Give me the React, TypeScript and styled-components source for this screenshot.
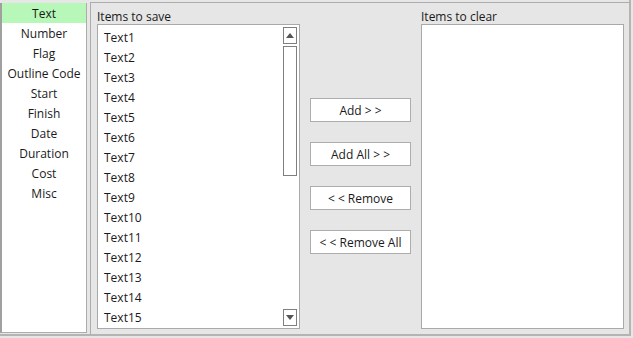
import { FC } from "react";
import styled, { createGlobalStyle } from "styled-components";

const GlobalStyle = createGlobalStyle`
html, body {
  margin: 0;
  padding: 0;
  background: #e6e6e6;
}
* {
  box-sizing: border-box;
}
`;

const Window = styled.div`
width: 633px;
height: 338px;
background: #e6e6e6;
font-family: "Open Sans", "Noto Sans", sans-serif;
font-size: 12px;
color: #1a1a1a;
overflow: hidden;
`;

const Frame = styled.div`
width: 631px;
height: 336px;
display: flex;
align-items: stretch;
border-right: 2px solid #b4b4b4;
border-bottom: 2px solid #b4b4b4;
`;

const CategoryList = styled.div`
width: 87px;
margin-top: 3px;
margin-bottom: 1px;
background: #fff;
border: 1px solid #acacac;
border-left: 2px solid #a0a0a0;
border-top: none;
display: flex;
flex-direction: column;
`;

const CategoryItem = styled.div<{ $selected?: boolean }>`
height: 20px;
line-height: 22px;
text-align: center;
white-space: nowrap;
background: ${p => (p.$selected ? "#b7f7b7" : "transparent")};
`;

const MainPanel = styled.div`
flex: 1;
margin-left: 3px;
margin-top: 2px;
border-top: 1px solid #acacac;
border-left: 1px solid #acacac;
display: grid;
grid-template-columns: 203px 101px 203px;
grid-template-rows: 20px 1fr;
column-gap: 10px;
padding: 1px 0 5px 6px;
`;

const Label = styled.div`
line-height: 20px;
padding-top: 3px;
white-space: nowrap;
`;

const ListBox = styled.div`
background: #fff;
border: 1px solid #a9a9a9;
display: flex;
overflow: hidden;
`;

const ListItems = styled.div`
flex: 1;
padding: 3px 0 0 6px;
`;

const ListItem = styled.div`
height: 20px;
line-height: 20px;
`;

const ScrollBar = styled.div`
width: 14px;
margin: 2px 2px 2px 0;
display: flex;
flex-direction: column;
gap: 2px;
`;

const ArrowButton = styled.div`
height: 17px;
border: 1px solid #7f7f7f;
display: flex;
align-items: center;
justify-content: center;
`;

const Track = styled.div`
flex: 1;
display: flex;
flex-direction: column;
`;

const Thumb = styled.div`
height: 130px;
border: 1px solid #7f7f7f;
background: #fff;
`;

const ButtonColumn = styled.div`
display: flex;
flex-direction: column;
gap: 20px;
padding-top: 74px;
`;

const ActionButton = styled.button`
height: 24px;
width: 101px;
background: #fff;
border: 1px solid #adadad;
font-family: inherit;
font-size: 12px;
color: #1a1a1a;
padding: 0;
`;

const categories = ["Text", "Number", "Flag", "Outline Code", "Start", "Finish", "Date", "Duration", "Cost", "Misc"];
const items = Array.from({ length: 15 }, (_, i) => `Text${i + 1}`);

const Arrow: FC<{ down?: boolean }> = ({ down }) => (
    <svg width="8" height="5" viewBox="0 0 8 5">
        <polygon points={down ? "0,0 8,0 4,5" : "0,5 8,5 4,0"} fill="#555" />
    </svg>
);

const App: FC = () => {
    return (
        <Window>
            <GlobalStyle />
            <Frame>
                <CategoryList>
                    {categories.map((c, i) => (
                        <CategoryItem key={c} $selected={i === 0}>{c}</CategoryItem>
                    ))}
                </CategoryList>
                <MainPanel>
                    <Label>Items to save</Label>
                    <div />
                    <Label>Items to clear</Label>
                    <ListBox>
                        <ListItems>
                            {items.map(t => <ListItem key={t}>{t}</ListItem>)}
                        </ListItems>
                        <ScrollBar>
                            <ArrowButton><Arrow /></ArrowButton>
                            <Track><Thumb /></Track>
                            <ArrowButton><Arrow down /></ArrowButton>
                        </ScrollBar>
                    </ListBox>
                    <ButtonColumn>
                        <ActionButton>Add &gt; &gt;</ActionButton>
                        <ActionButton>Add All &gt; &gt;</ActionButton>
                        <ActionButton>&lt; &lt; Remove</ActionButton>
                        <ActionButton>&lt; &lt; Remove All</ActionButton>
                    </ButtonColumn>
                    <ListBox />
                </MainPanel>
            </Frame>
        </Window>
    );
};

export default App;
